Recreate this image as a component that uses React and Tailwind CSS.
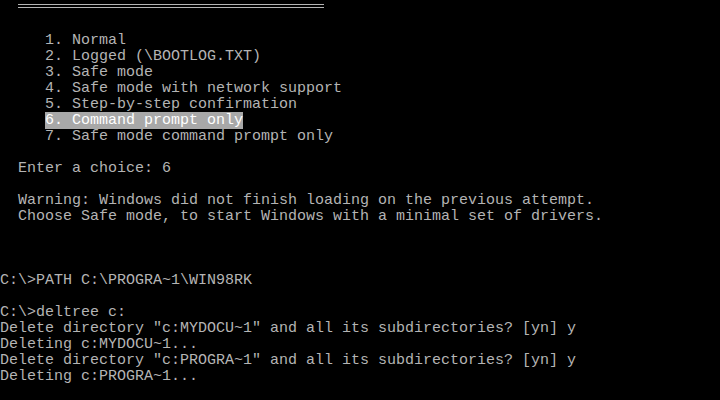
import React from 'react';

const Line = ({ children }) => (
    <div className="h-4 whitespace-pre">{children}</div>
);

const App = () => (
    <div className="w-[720px] h-[400px] bg-black text-[#b4b4b4] font-['Liberation_Mono',monospace] text-[15px] leading-4 overflow-hidden">
        <div className="h-4 pt-[4px]">
            <div className="ml-[18px] w-[306px] h-[4px] border-y border-[#b4b4b4]" />
        </div>
        <div className="pt-px">
            <Line />
            <Line>{'     1. Normal'}</Line>
            <Line>{'     2. Logged (\\BOOTLOG.TXT)'}</Line>
            <Line>{'     3. Safe mode'}</Line>
            <Line>{'     4. Safe mode with network support'}</Line>
            <Line>{'     5. Step-by-step confirmation'}</Line>
            <Line>
                {'     '}
                <span className="bg-[#a8a8a8] text-white">6. Command prompt only</span>
            </Line>
            <Line>{'     7. Safe mode command prompt only'}</Line>
            <Line />
            <Line>{'  Enter a choice: 6'}</Line>
            <Line />
            <Line>{'  Warning: Windows did not finish loading on the previous attempt.'}</Line>
            <Line>{'  Choose Safe mode, to start Windows with a minimal set of drivers.'}</Line>
            <Line />
            <Line />
            <Line />
            <Line>{'C:\\>PATH C:\\PROGRA~1\\WIN98RK'}</Line>
            <Line />
            <Line>{'C:\\>deltree c:'}</Line>
            <Line>{'Delete directory "c:MYDOCU~1" and all its subdirectories? [yn] y'}</Line>
            <Line>{'Deleting c:MYDOCU~1...'}</Line>
            <Line>{'Delete directory "c:PROGRA~1" and all its subdirectories? [yn] y'}</Line>
            <Line>{'Deleting c:PROGRA~1...'}</Line>
        </div>
    </div>
);

export default App;
